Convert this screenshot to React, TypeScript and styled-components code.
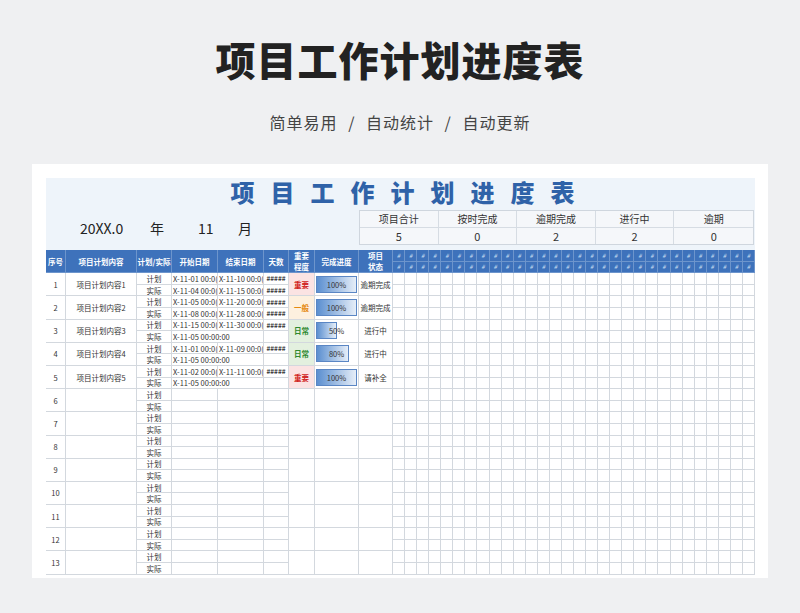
import React from "react";
import styled, { createGlobalStyle } from "styled-components";

const G = createGlobalStyle`
  body{margin:0;background:#eff0f2;font-family:"Noto Sans CJK SC","Noto Sans",sans-serif;}
`;
const Page = styled.div`width:800px;height:613px;overflow:hidden;display:flex;flex-direction:column;align-items:center;`;
const H1 = styled.h1`margin:33px 0 0;font-size:40px;font-weight:900;color:#222;letter-spacing:1px;line-height:52px;`;
const Sub = styled.div`margin-top:25px;font-size:16px;color:#444;letter-spacing:1px;word-spacing:6px;`;
const Card = styled.div`margin-top:30px;width:736px;height:414px;background:#fff;padding:14px 13px 0 14px;box-sizing:border-box;overflow:hidden;`;
const TitleBand = styled.div`height:27px;background:#eef4fa;display:flex;justify-content:center;align-items:center;font-size:24px;font-weight:900;color:#2f62a8;letter-spacing:16px;padding-left:20px;`;
const Info = styled.div`height:45px;background:#eef4fa;display:flex;align-items:center;`;
const Date = styled.div`width:313px;display:flex;font-size:14px;color:#222;padding-left:34px;box-sizing:border-box;gap:0;`;
const DItem = styled.span<{w:number}>`width:${p=>p.w}px;`;
const Summary = styled.div`flex:1;display:grid;grid-template-columns:repeat(5,1fr);border:1px solid #cfd6de;margin-right:1px;background:#f5f7fa;`;
const SCell = styled.div`height:16px;border-right:1px solid #d6dce3;border-bottom:1px solid #d6dce3;font-size:10px;text-align:center;line-height:16px;color:#333;&:nth-child(5n){border-right:none}`;
const SVal = styled(SCell)`font-size:11px;border-bottom:none;`;
const Table = styled.div`display:grid;grid-template-columns:20px 71px 35px 46px 46px 25px 26px 44px 34px repeat(30,1fr);grid-auto-rows:11.6px;font-size:7.5px;color:#333;`;
const Hd = styled.div<{span?:number}>`grid-row:span ${p=>p.span||2};background:#3e72bb;color:#fff;font-weight:700;display:flex;align-items:center;justify-content:center;text-align:center;line-height:11px;border-right:1px solid #6d95cc;border-bottom:1px solid #6d95cc;font-size:7.5px;`;
const Hash = styled(Hd)`font-size:6px;font-weight:400;color:#cfe0f5;font-style:italic;`;
const C = styled.div<{span?:number;align?:string;bg?:string}>`grid-row:span ${p=>p.span||1};border-right:1px solid #d3d8de;border-bottom:1px solid #d3d8de;display:flex;align-items:center;justify-content:${p=>p.align||"center"};white-space:nowrap;overflow:hidden;background:${p=>p.bg||"#fff"};padding:0 1px;`;
const Imp = styled(C)<{color:string}>`color:${p=>p.color};font-weight:700;`;
const Bar = styled.div`height:17px;border:1px solid #5a86c4;box-sizing:border-box;background:linear-gradient(90deg,#5b8fd0,#e6eef8);`;
const BarWrap = styled.div`width:42px;display:flex;position:relative;`;
const BarLabel = styled.span`position:absolute;left:0;right:0;top:0;bottom:0;display:flex;align-items:center;justify-content:center;`;

const data = [
  {s:"X-11-01 00:0(",e:"X-11-10 00:0(",as:"X-11-04 00:0(",ae:"X-11-15 00:0(",imp:"重要",p:100,st:"逾期完成",ad:true},
  {s:"X-11-05 00:0(",e:"X-11-20 00:0(",as:"X-11-08 00:0(",ae:"X-11-28 00:0(",imp:"一般",p:100,st:"逾期完成",ad:true},
  {s:"X-11-15 00:0(",e:"X-11-30 00:0(",as:"X-11-05 00:00:00",ae:"",imp:"日常",p:50,st:"进行中",ad:false},
  {s:"X-11-01 00:0(",e:"X-11-09 00:0(",as:"X-11-05 00:00:00",ae:"",imp:"日常",p:80,st:"进行中",ad:false},
  {s:"X-11-02 00:0(",e:"X-11-11 00:0(",as:"X-11-05 00:00:00",ae:"",imp:"重要",p:100,st:"请补全",ad:false},
];
const impStyle:Record<string,[string,string]> = {"重要":["#d0201a","#fbe3e3"],"一般":["#e58a10","#fdf0df"],"日常":["#2f8a2f","#e3f0df"]};

const grid = (k:string)=>Array.from({length:30},(_,i)=><C key={k+i} span={1}/>);

export default function App(){
  const rows=[];
  for(let i=0;i<13;i++){
    const d=data[i];
    rows.push(<C key={"n"+i} span={2}>{i+1}</C>);
    rows.push(<C key={"t"+i} span={2}>{d?`项目计划内容${i+1}`:""}</C>);
    rows.push(<C key={"a"+i}>计划</C>);
    rows.push(<C key={"b"+i} align="flex-start">{d?.s}</C>);
    rows.push(<C key={"c"+i} align="flex-start">{d?.e}</C>);
    rows.push(<C key={"d"+i} style={{fontWeight:700,fontSize:6.5}}>{d?"#####":""}</C>);
    const is=d?impStyle[d.imp]:null;
    rows.push(<Imp key={"i"+i} span={2} color={is?is[0]:"#333"} bg={is?is[1]:"#fff"}>{d?.imp}</Imp>);
    rows.push(<C key={"p"+i} span={2} align="flex-start">{d&&<BarWrap><Bar style={{width:`${d.p}%`}}/><BarLabel>{d.p}%</BarLabel></BarWrap>}</C>);
    rows.push(<C key={"s"+i} span={2}>{d?.st}</C>);
    rows.push(...grid("g1"+i));
    rows.push(<C key={"r"+i}>实际</C>);
    if(d&&!d.ad){
      rows.push(<C key={"x"+i} align="flex-start" style={{gridColumn:"span 2",overflow:"visible"}}>{d.as}</C>);
    }else{
      rows.push(<C key={"x"+i} align="flex-start">{d?.as}</C>);
      rows.push(<C key={"y"+i} align="flex-start">{d?.ae}</C>);
    }
    rows.push(<C key={"z"+i} style={{fontWeight:700,fontSize:6.5}}>{d&&d.ad?"#####":""}</C>);
    rows.push(...grid("g2"+i));
  }
  return <Page><G/>
    <H1>项目工作计划进度表</H1>
    <Sub>简单易用 / 自动统计 / 自动更新</Sub>
    <Card>
      <TitleBand>项目工作计划进度表</TitleBand>
      <Info>
        <Date><DItem w={70}>20XX.0</DItem><DItem w={48}>年</DItem><DItem w={40}>11</DItem><DItem w={30}>月</DItem></Date>
        <Summary>
          {["项目合计","按时完成","逾期完成","进行中","逾期"].map(t=><SCell key={t}>{t}</SCell>)}
          {[5,0,2,2,0].map((v,i)=><SVal key={i}>{v}</SVal>)}
        </Summary>
      </Info>
      <Table>
        <Hd>序号</Hd><Hd>项目计划内容</Hd><Hd>计划/实际</Hd><Hd>开始日期</Hd><Hd>结束日期</Hd><Hd>天数</Hd>
        <Hd>重要<br/>程度</Hd><Hd>完成进度</Hd><Hd>项目<br/>状态</Hd>
        {Array.from({length:30},(_,i)=><Hash key={"h"+i} span={1}>#</Hash>)}
        {Array.from({length:30},(_,i)=><Hash key={"k"+i} span={1}>#</Hash>)}
        {rows}
      </Table>
    </Card>
  </Page>;
}
